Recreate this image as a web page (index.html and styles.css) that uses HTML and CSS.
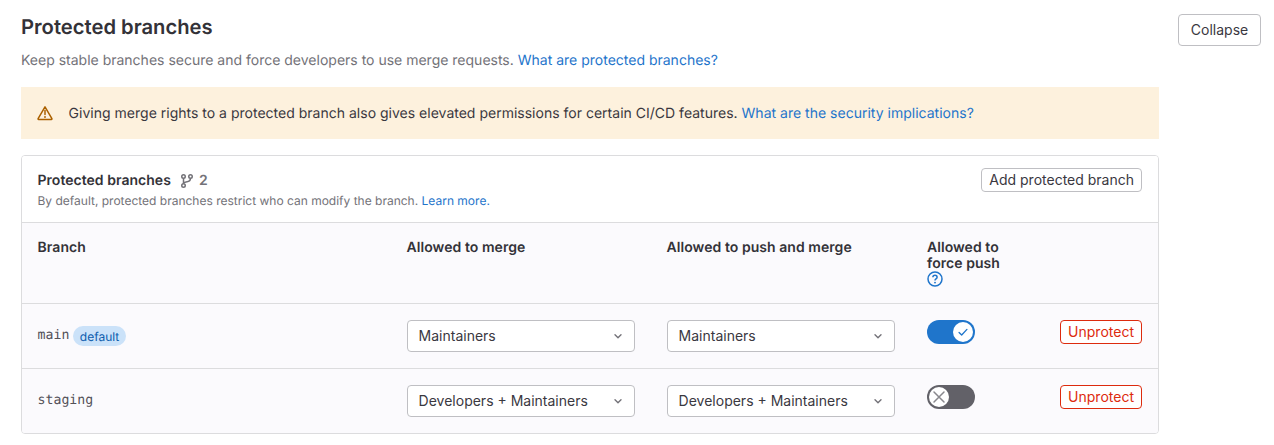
FILE: index.html
```html
<!DOCTYPE html>
<html lang="en">
<head>
<meta charset="utf-8">
<title>Protected branches</title>
<link rel="stylesheet" href="styles.css">
</head>
<body>
<section class="settings">
  <div class="main">
    <h2 class="title">Protected branches</h2>
    <p class="desc">Keep stable branches secure and force developers to use merge requests. <a href="#">What are protected branches?</a></p>
    <div class="alert">
      <svg class="alert-icon" viewBox="0 0 16 16" width="16" height="16" aria-hidden="true"><path d="M8 1.8 14.9 13.6a.6.6 0 0 1-.5.9H1.6a.6.6 0 0 1-.5-.9Z" fill="none" stroke="#ab6100" stroke-width="1.5" stroke-linejoin="round"/><path d="M8 5.6v4" stroke="#ab6100" stroke-width="1.5" stroke-linecap="round"/><circle cx="8" cy="12" r=".95" fill="#ab6100"/></svg>
      <span class="alert-text">Giving merge rights to a protected branch also gives elevated permissions for certain CI/CD features. <a href="#">What are the security implications?</a></span>
    </div>
    <div class="card">
      <div class="card-head">
        <div class="card-info">
          <div class="card-title"><strong>Protected branches</strong>
            <span class="count">
              <svg viewBox="0 0 16 16" width="16" height="16" aria-hidden="true"><g fill="none" stroke="#737278" stroke-width="1.5"><circle cx="4.5" cy="3.5" r="1.75"/><circle cx="4.5" cy="12.5" r="1.75"/><circle cx="11.5" cy="3.5" r="1.75"/><path d="M4.5 5.25v5.5M11.5 5.25c0 2.6-1.4 3.2-3.5 3.4-1.6.15-3 .4-3.5 1.6"/></g></svg>
              <span>2</span>
            </span>
          </div>
          <p class="card-sub">By default, protected branches restrict who can modify the branch. <a href="#">Learn more.</a></p>
        </div>
        <button class="btn btn-small" type="button">Add protected branch</button>
      </div>
      <div class="row row-head">
        <div class="cell">Branch</div>
        <div class="cell">Allowed to merge</div>
        <div class="cell">Allowed to push and merge</div>
        <div class="cell force">Allowed to<br>force push<br>
          <svg class="help" viewBox="0 0 16 16" width="16" height="16" aria-hidden="true"><circle cx="8" cy="8" r="7" fill="none" stroke="#1f75cb" stroke-width="1.5"/><path d="M5.9 6.3c0-1.3 1-2.1 2.1-2.1s2.1.8 2.1 2c0 1.7-2.1 1.7-2.1 3.2" fill="none" stroke="#1f75cb" stroke-width="1.5"/><circle cx="8" cy="11.6" r=".95" fill="#1f75cb"/></svg>
        </div>
      </div>
      <div class="row row-body">
        <div class="cell branch"><code>main</code><span class="badge">default</span></div>
        <div class="cell"><button class="select" type="button"><span>Maintainers</span><svg viewBox="0 0 16 16" width="16" height="16" aria-hidden="true"><path d="M5 6.75 8 9.75l3-3" fill="none" stroke="#737278" stroke-width="1.4" stroke-linecap="round" stroke-linejoin="round"/></svg></button></div>
        <div class="cell"><button class="select" type="button"><span>Maintainers</span><svg viewBox="0 0 16 16" width="16" height="16" aria-hidden="true"><path d="M5 6.75 8 9.75l3-3" fill="none" stroke="#737278" stroke-width="1.4" stroke-linecap="round" stroke-linejoin="round"/></svg></button></div>
        <div class="cell actions">
          <span class="toggle on"><span class="knob"><svg viewBox="0 0 16 16" width="14" height="14" aria-hidden="true"><path d="m3.5 8.5 3 3 6-6.5" fill="none" stroke="#1f75cb" stroke-width="1.5" stroke-linecap="round" stroke-linejoin="round"/></svg></span></span>
          <button class="btn btn-danger" type="button">Unprotect</button>
        </div>
      </div>
      <div class="row row-body">
        <div class="cell branch"><code>staging</code></div>
        <div class="cell"><button class="select" type="button"><span>Developers + Maintainers</span><svg viewBox="0 0 16 16" width="16" height="16" aria-hidden="true"><path d="M5 6.75 8 9.75l3-3" fill="none" stroke="#737278" stroke-width="1.4" stroke-linecap="round" stroke-linejoin="round"/></svg></button></div>
        <div class="cell"><button class="select" type="button"><span>Developers + Maintainers</span><svg viewBox="0 0 16 16" width="16" height="16" aria-hidden="true"><path d="M5 6.75 8 9.75l3-3" fill="none" stroke="#737278" stroke-width="1.4" stroke-linecap="round" stroke-linejoin="round"/></svg></button></div>
        <div class="cell actions">
          <span class="toggle off"><span class="knob"><svg viewBox="0 0 16 16" width="16" height="16" aria-hidden="true"><path d="m3 3 10 10M13 3 3 13" fill="none" stroke="#89888d" stroke-width="1.5" stroke-linecap="round"/></svg></span></span>
          <button class="btn btn-danger" type="button">Unprotect</button>
        </div>
      </div>
    </div>
  </div>
  <button class="btn btn-collapse" type="button">Collapse</button>
</section>
</body>
</html>
```
FILE: styles.css
```css
* { box-sizing: border-box; }
html, body { margin: 0; padding: 0; background: #fff; }
body {
  font-family: Inter, "Noto Sans", sans-serif;
  font-size: 14px;
  line-height: 20px;
  color: #333238;
  height: 445px;
  overflow: hidden;
  text-rendering: geometricPrecision;
}
a { color: #1f75cb; text-decoration: none; }
.settings {
  display: flex;
  align-items: flex-start;
  padding: 14px 13px 0 21px;
}
.main { width: 1138px; flex: none; }
.title {
  margin: 0;
  font-size: 20.2px;
  line-height: 26px;
  font-weight: 600;
  color: #333238;
}
.desc {
  margin: 11px 0 0;
  color: #737278;
  line-height: 20px;
}
.alert {
  display: flex;
  align-items: center;
  gap: 16px;
  height: 52px;
  margin-top: 16px;
  padding-left: 16px;
  background: #fdf1dd;
  color: #3a383f;
}
.alert-icon { flex: none; }
.alert-text { padding-top: 2px; letter-spacing: .008px; margin-left: -.4px; }
.card {
  height: 279px;
  margin-top: 16px;
  border: 1px solid #dcdcde;
  border-radius: 4px;
  overflow: hidden;
}
.card-head {
  display: flex;
  justify-content: space-between;
  align-items: flex-start;
  height: 67px;
  padding: 12px 16px 0 15.5px;
  background: #fff;
  border-bottom: 1px solid #dcdcde;
}
.card-title {
  display: flex;
  align-items: center;
  gap: 8px;
  height: 24px;
  padding-top: 2px;
}
.card-title strong { font-weight: 600; letter-spacing: .03px; }
.count {
  display: inline-flex;
  align-items: center;
  gap: 4px;
  color: #737278;
  font-weight: 600;
}
.card-sub {
  margin: 1px 0 0;
  font-size: 12px;
  line-height: 16px;
  color: #737278;
}
.row {
  display: grid;
  grid-template-columns: 369px 260px 260px 1fr;
  background: #fbfafd;
  border-bottom: 1px solid #dcdcde;
}
.row-head { height: 81px; font-weight: 600; letter-spacing: .05px; }
.row-body { height: 65px; }
.cell { padding: 16px; }
.row-head .cell { line-height: 16px; padding-top: 17px; padding-left: 15.6px; }
.row-head .force { padding-left: 16px; }
.help { display: block; margin-top: -1px; }
.branch { display: flex; align-items: center; gap: 4px; padding-left: 15.6px; }
code {
  font-family: "DejaVu Sans Mono", "Liberation Mono", monospace;
  font-size: 13.2px;
  color: #535158;
}
.badge {
  display: inline-block;
  height: 20px;
  padding: 0 6.5px;
  border-radius: 10px;
  background: #cbe2f9;
  color: #0b5cad;
  font-size: 12px;
  line-height: 21px;
}
.select {
  display: flex;
  align-items: center;
  justify-content: space-between;
  width: 228px;
  height: 32px;
  padding: 0 8px 0 10.6px;
  border: 1px solid #bfbfc3;
  border-radius: 4px;
  background: #fff;
  color: #3a383f;
  font: inherit;
}
.actions { display: flex; align-items: flex-start; justify-content: space-between; }
.toggle {
  display: inline-flex;
  align-items: center;
  width: 48px;
  height: 24px;
  border-radius: 12px;
  padding: 2px;
}
.toggle.on { background: #1f75cb; justify-content: flex-end; }
.toggle.off { background: #626168; justify-content: flex-start; }
.knob {
  display: flex;
  align-items: center;
  justify-content: center;
  width: 20px;
  height: 20px;
  border-radius: 50%;
  background: #fff;
}
.btn {
  font: inherit;
  background: #fff;
  border: 1px solid #bfbfc3;
  border-radius: 4px;
  color: #3a383f;
  cursor: pointer;
}
.btn-collapse {
  flex: none;
  width: 83px;
  height: 32px;
  margin-left: 19px;
  padding: 0;
}
.btn-small {
  height: 24px;
  padding: 0 7px;
  line-height: 20px;
}
.btn-danger {
  height: 24px;
  padding: 0 7px;
  line-height: 20px;
  color: #dd2b0e;
  border-color: #dd2b0e;
}
```
